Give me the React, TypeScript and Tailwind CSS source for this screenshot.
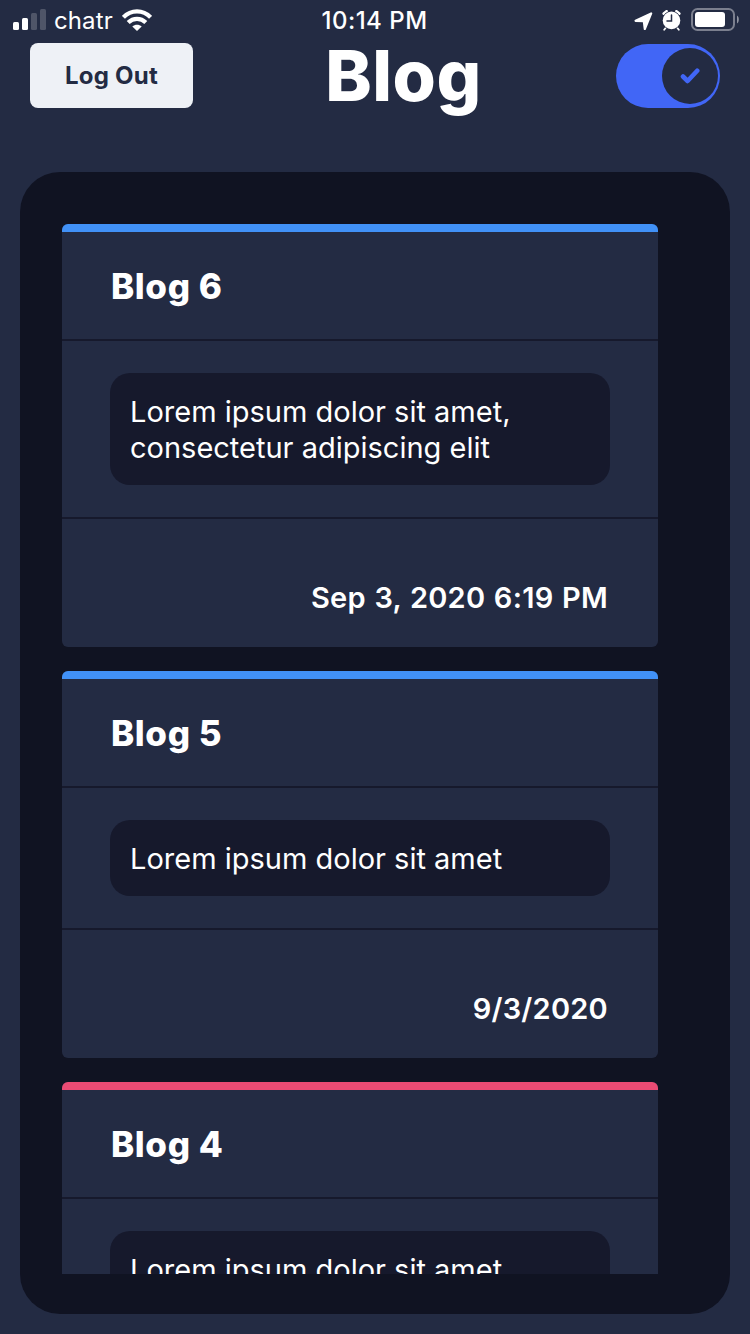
type Post = {
  title: string;
  body: string[];
  date: string;
  accent: string;
};

const posts: Post[] = [
  {
    title: "Blog 6",
    body: ["Lorem ipsum dolor sit amet,", "consectetur adipiscing elit"],
    date: "Sep 3, 2020 6:19 PM",
    accent: "bg-[#4191f7]",
  },
  { title: "Blog 5", body: ["Lorem ipsum dolor sit amet"], date: "9/3/2020", accent: "bg-[#4191f7]" },
  { title: "Blog 4", body: ["Lorem ipsum dolor sit amet"], date: "9/3/2020", accent: "bg-[#eb4b74]" },
];

function StatusBar() {
  return (
    <div className="grid h-10 shrink-0 grid-cols-3 items-center pl-[13px] pr-[11px]">
      <div className="flex items-center">
        <svg width="33" height="21" viewBox="0 0 33 21" fill="white" className="-mt-px">
          <rect x="0" y="13" width="6" height="8" rx="1.5" />
          <rect x="9" y="9" width="6" height="12" rx="1.5" />
          <rect x="18" y="4" width="6" height="17" rx="1.5" opacity="0.2" />
          <rect x="27" y="0" width="6" height="21" rx="1.5" opacity="0.2" />
        </svg>
        <span className="ml-2 pt-0.5 text-[24px] leading-[30px] tracking-[0.1px]">chatr</span>
        <svg width="30" height="22" viewBox="0 0 30 22" className="ml-[9px]">
          <g fill="none" stroke="white" strokeWidth="4.2">
            <path d="M1.4 8.4C9 0.4 21 0.4 28.6 8.4" />
            <path d="M6.2 13.6C11.2 8.7 18.8 8.7 23.8 13.6" />
          </g>
          <path d="M10.3 17.6C13 15 17 15 19.7 17.6L15 22Z" fill="white" />
        </svg>
      </div>
      <div className="-ml-[3px] pt-0.5 text-center text-[24px] font-medium leading-[30px] tracking-[0.5px]">10:14 PM</div>
      <div className="flex items-center justify-end">
        <svg width="19" height="19" viewBox="0 0 19 19" className="mt-[2px]">
          <path d="M17.2 1.4L1.6 8.8L9.8 9.2L10.8 17Z" fill="white" stroke="white" strokeWidth="2.2" strokeLinejoin="round" />
        </svg>
        <svg width="19" height="21" viewBox="0 0 19 21" className="ml-[9px] mt-px">
          <g stroke="white" strokeLinecap="round">
            <path d="M1.8 3.6L4.6 1.4M17.2 3.6L14.4 1.4" strokeWidth="2.8" />
            <path d="M4 17.5L2.2 19.8M15 17.5L16.8 19.8" strokeWidth="1.8" />
          </g>
          <circle cx="9.5" cy="10.4" r="9.1" fill="none" stroke="#232b43" strokeWidth="1" />
          <circle cx="9.5" cy="10.4" r="8.8" fill="white" />
          <path d="M9.5 5V11H5" fill="none" stroke="#232b43" strokeWidth="1.5" strokeLinecap="round" />
        </svg>
        <svg width="48" height="23" viewBox="0 0 48 23" className="ml-[10px] -mt-px">
          <rect x="1" y="1" width="42" height="21" rx="5.5" fill="none" stroke="white" strokeOpacity="0.4" strokeWidth="2" />
          <rect x="4" y="4" width="30" height="15" rx="3" fill="white" />
          <path d="M46 7.5C48.4 8.8 48.4 14.2 46 15.5Z" fill="white" fillOpacity="0.5" />
        </svg>
      </div>
    </div>
  );
}

function Header() {
  return (
    <header className="grid h-[132px] shrink-0 grid-cols-[193px_1fr_134px] items-start pl-[30px] pr-[30px] pt-[3px]">
      <button className="h-[65px] w-[163px] rounded-lg bg-[#eef1f6] text-[24px] font-bold tracking-[0.25px] text-[#232b43]">
        Log Out
      </button>
      <h1 className="-ml-[2px] text-center text-[70px] font-extrabold leading-[65px] tracking-[0.5px]">Blog</h1>
      <div className="mt-px flex h-16 w-[104px] items-center justify-end justify-self-end rounded-full bg-[#4166f6] pr-[2px]">
        <div className="flex size-14 items-center justify-center rounded-full bg-[#232b43]">
          <svg width="20" height="16" viewBox="0 0 20 16">
            <path d="M3 8.5L7.6 13L17.2 2.7" fill="none" stroke="#4166f6" strokeWidth="4.6" strokeLinecap="round" strokeLinejoin="round" />
          </svg>
        </div>
      </div>
    </header>
  );
}

function PostCard({ post }: { post: Post }) {
  return (
    <article className="shrink-0 overflow-hidden rounded-[6px] bg-[#232b43]">
      <div className={`h-2 ${post.accent}`} />
      <h2 className="flex h-[107px] items-center pl-[49px] pt-0.5 text-[35px] font-extrabold tracking-[0.6px]">{post.title}</h2>
      <div className="border-y-2 border-[#16192c] px-12 py-8">
        <div className="rounded-[20px] bg-[#16192c] px-5 pb-[19px] pt-[21px] text-[29px] leading-9">
          {post.body.map((line) => (
            <p key={line} className="whitespace-nowrap">
              {line}
            </p>
          ))}
        </div>
      </div>
      <div className="flex h-32 items-end justify-end px-[50px] pb-[31px] text-[29px] font-semibold leading-9 tracking-[0.25px] [word-spacing:1px]">{post.date}</div>
    </article>
  );
}

export default function App() {
  return (
    <div className="flex h-[1334px] w-[750px] flex-col overflow-hidden bg-[#232b43] font-['Inter',sans-serif] text-white">
      <StatusBar />
      <Header />
      <main className="mx-5 mb-5 min-h-0 flex-1 rounded-[40px] bg-[#101322] pb-10 pl-[42px] pr-[72px] pt-[52px]">
        <div className="flex h-full flex-col gap-6 overflow-hidden">
          {posts.map((post) => (
            <PostCard key={post.title} post={post} />
          ))}
        </div>
      </main>
    </div>
  );
}
